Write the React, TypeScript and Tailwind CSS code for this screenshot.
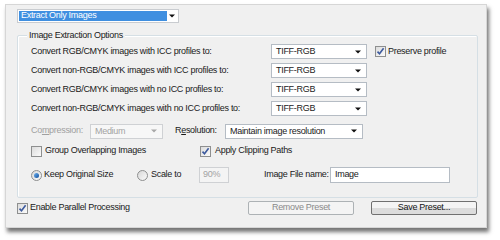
import type { ReactNode } from "react";

const font = { fontFamily: '"Liberation Sans", Arial, sans-serif' };

function Arrow({ disabled }: { disabled?: boolean }) {
  return (
    <svg width="6" height="4" viewBox="0 0 6 4" className="shrink-0">
      <path d="M0 0.5h6L3 3.5z" fill={disabled ? "#a8a8a8" : "#111"} />
    </svg>
  );
}

function Select({
  value,
  className,
  disabled,
}: {
  value: string;
  className: string;
  disabled?: boolean;
}) {
  return (
    <div
      className={[
        "flex h-[15px] items-center justify-between border pl-[4px] pr-[5px]",
        disabled
          ? "border-[#cfd1d4] bg-[#f7f7f7] text-[#a3a3a3]"
          : "border-[#b5bcc4] bg-white text-[#222]",
        className,
      ].join(" ")}
    >
      <span className="leading-none">{value}</span>
      <Arrow disabled={disabled} />
    </div>
  );
}

function Check({ checked }: { checked?: boolean }) {
  return (
    <div className="flex h-[11px] w-[11px] shrink-0 items-center justify-center border border-[#8e8f8f] bg-gradient-to-br from-[#dcdcdc] to-[#fbfbfb]">
      {checked && (
        <svg width="9" height="9" viewBox="0 0 9 9">
          <path
            d="M1.5 4.6l2 2.2L7.6 1.3"
            fill="none"
            stroke="#3d5a9e"
            strokeWidth="1.6"
          />
        </svg>
      )}
    </div>
  );
}

function Radio({ checked }: { checked?: boolean }) {
  return (
    <div className="flex h-[11px] w-[11px] shrink-0 items-center justify-center rounded-full border border-[#8e8f8f] bg-gradient-to-br from-[#d8d8d8] to-[#fafafa]">
      {checked && (
        <div className="h-[5px] w-[5px] rounded-full bg-gradient-to-br from-[#6fb3f0] to-[#0d4d9b]" />
      )}
    </div>
  );
}

function Row({ children, className }: { children: ReactNode; className?: string }) {
  return (
    <div className={"flex items-center whitespace-nowrap " + (className ?? "")}>
      {children}
    </div>
  );
}

export default function App() {
  return (
    <div
      className="h-[240px] w-[500px] bg-white pl-[5px] pt-[4px] text-[9px] tracking-[-0.3px] text-[#1a1a1a]"
      style={font}
    >
      <div className="h-[224px] w-[482px] border border-[#d6d6d6] bg-[#f0f0f0] pl-[11px] pt-[4px] shadow-[2px_4px_4px_rgba(0,0,0,0.55)]">
        {/* preset picker */}
        <div className="flex h-[14px] w-[162px] items-center border border-[#c9ccd0] bg-white p-px">
          <div className="flex h-full w-[148px] items-center bg-[#3f8fe0] pl-[2px] text-white">
            Extract Only Images
          </div>
          <div className="flex flex-1 justify-center">
            <Arrow />
          </div>
        </div>

        {/* group box */}
        <div className="relative mt-[12px] h-[163px] w-[461px] rounded-[2px] border border-[#d5dfe5] pl-[13px] pt-[6px] shadow-[inset_1px_1px_0_#fff]">
          <span className="absolute left-[9px] top-[-7px] bg-[#f0f0f0] px-[2px] leading-[12px]">
            Image Extraction Options
          </span>

          <Row className="h-[19px]">
            <span className="w-[240px]">Convert RGB/CMYK images with ICC profiles to:</span>
            <Select value="TIFF-RGB" className="w-[96px]" />
            <div className="ml-[8px] flex items-center gap-[2px]">
              <Check checked />
              <span>Preserve profile</span>
            </div>
          </Row>
          <Row className="h-[19px]">
            <span className="w-[240px]">Convert non-RGB/CMYK images with ICC profiles to:</span>
            <Select value="TIFF-RGB" className="w-[96px]" />
          </Row>
          <Row className="h-[19px]">
            <span className="w-[240px]">Convert RGB/CMYK images with no ICC profiles to:</span>
            <Select value="TIFF-RGB" className="w-[96px]" />
          </Row>
          <Row className="h-[19px]">
            <span className="w-[240px]">Convert non-RGB/CMYK images with no ICC profiles to:</span>
            <Select value="TIFF-RGB" className="w-[96px]" />
          </Row>

          <Row className="mt-[3px] h-[20px]">
            <span className="w-[59px] text-[#a0a0a0]">
              Co<span className="underline">m</span>pression:
            </span>
            <Select value="Medium" className="w-[73px]" disabled />
            <span className="ml-[12px] w-[50px]">
              R<span className="underline">e</span>solution:
            </span>
            <Select value="Maintain image resolution" className="w-[138px]" />
          </Row>

          <Row className="h-[20px]">
            <div className="flex w-[169px] items-center gap-[3px]">
              <Check />
              <span>Group Overlapping Images</span>
            </div>
            <div className="flex items-center gap-[4px]">
              <Check checked />
              <span>Apply Clipping Paths</span>
            </div>
          </Row>

          <Row className="mt-[4px] h-[20px]">
            <div className="flex w-[106px] items-center gap-[2px]">
              <Radio checked />
              <span>Keep Original Size</span>
            </div>
            <div className="flex w-[62px] items-center gap-[3px]">
              <Radio />
              <span>Scale to</span>
            </div>
            <div className="flex h-[16px] w-[30px] items-center border border-[#cfd1d4] bg-[#f4f4f4] pl-[3px] text-[#a3a3a3]">
              90%
            </div>
            <span className="ml-[35px] w-[66px]">Image File name:</span>
            <div className="flex h-[16px] w-[120px] items-center border border-[#b5bcc4] bg-white pl-[4px]">
              Image
            </div>
          </Row>
        </div>

        {/* bottom bar */}
        <Row className="mt-[3px] h-[14px]">
          <div className="flex w-[231px] items-center gap-[2px]">
            <Check checked />
            <span>Enable Parallel Processing</span>
          </div>
          <div className="flex h-[14px] w-[106px] items-center justify-center rounded-[2px] border border-[#adb2b5] bg-[#f4f4f4] text-[#8a8a8a]">
            Remove Preset
          </div>
          <div className="ml-[17px] flex h-[14px] w-[106px] items-center justify-center rounded-[2px] border border-[#707070] bg-gradient-to-b from-[#f4f4f4] from-50% to-[#dcdcdc] to-50% text-[#111]">
            Save Preset...
          </div>
        </Row>
      </div>
    </div>
  );
}
